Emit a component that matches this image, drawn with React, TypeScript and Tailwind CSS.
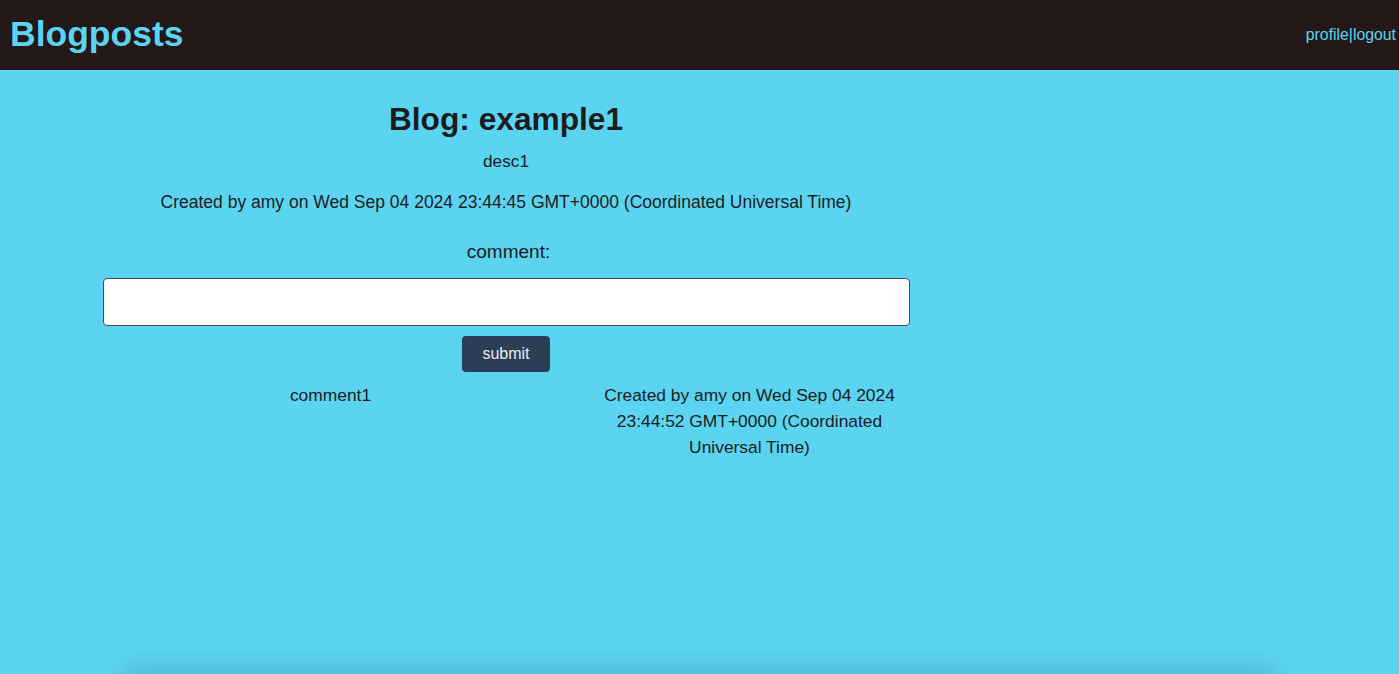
import React from "react";

const comments = [
  {
    text: "comment1",
    author: "amy",
    created: "Wed Sep 04 2024 23:44:52 GMT+0000 (Coordinated Universal Time)",
  },
];

export default function App() {
  return (
    <div className="flex min-h-screen flex-col bg-[#5bd4f2] font-['Liberation_Sans',Arial,sans-serif] text-[#1c1c1c]">
      <header className="flex h-[70px] items-center justify-between bg-[#231718] pl-[10px] pr-[3px]">
        <h1 className="text-[35.5px] font-bold leading-none text-[#5bd4f2]">Blogposts</h1>
        <nav className="text-[15.8px] text-[#5bd4f2]">
          <a href="#">profile</a>|<a href="#">logout</a>
        </nav>
      </header>

      <main className="flex min-h-[604px] flex-1">
        <div className="flex w-[1012px] flex-col items-center">
          <h2 className="mt-[30px] text-[31.7px] font-bold leading-[38px]">Blog: example1</h2>
          <p className="mt-[13px] text-[17.3px] leading-[20px]">desc1</p>
          <p className="mt-[21px] text-[17.5px] leading-[20px]">
            Created by amy on Wed Sep 04 2024 23:44:45 GMT+0000 (Coordinated Universal Time)
          </p>
          <label className="mt-[29px] pl-[5px] text-[19px] leading-[22px]">comment:</label>
          <input
            type="text"
            className="mt-[15px] h-[48px] w-[807px] rounded-[4px] border border-[#4a4a4a] bg-white px-3"
          />
          <button className="mt-[10px] h-[36px] rounded-[4px] bg-[#2c3e55] px-5 text-[16px] text-[#e8ecef]">
            submit
          </button>
          <div className="mt-[10px] w-[807px]">
            {comments.map((c, i) => (
              <div key={i} className="flex text-[17.4px] leading-[26px]">
                <div className="w-[456px] text-center">{c.text}</div>
                <div className="ml-[41px] w-[300px] text-center">
                  {`Created by ${c.author} on ${c.created}`}
                </div>
              </div>
            ))}
          </div>
        </div>
      </main>

      <footer className="mx-[125px] h-[60px] bg-[#5bd4f2] shadow-[0_-6px_28px_rgba(0,0,0,0.14)]" />
    </div>
  );
}
